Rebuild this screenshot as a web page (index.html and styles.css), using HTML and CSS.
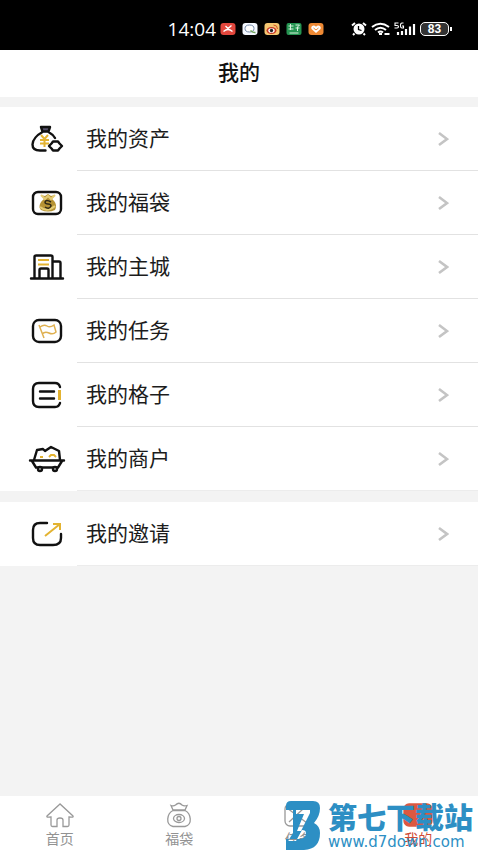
FILE: index.html
```html
<!DOCTYPE html>
<html lang="zh-CN">
<head>
<meta charset="utf-8">
<meta name="viewport" content="width=device-width, initial-scale=1">
<title>我的</title>
<link rel="stylesheet" href="styles.css">
</head>
<body>
<div class="status">
  <span class="time">14:04</span>
  <span class="apps">
    <svg class="app" viewBox="0 0 15 14"><rect y="1" width="15" height="12" rx="3" fill="#e2473d"/><path d="M3 9.500q4.500-4 9 0M5 4l2.500 2.500L11 3.500" fill="none" stroke="#fff" stroke-width="1.300"/></svg>
    <svg class="app" viewBox="0 0 15 14"><rect y="1" width="15" height="12" rx="3" fill="#f4f8ff"/><ellipse cx="7" cy="6.500" rx="4.500" ry="3.500" fill="#fff" stroke="#7489a8"/><path d="M8 8.500q3 2.500 5 2" fill="none" stroke="#6fa45c" stroke-width="1.500"/></svg>
    <svg class="app" viewBox="0 0 15 14"><rect y="1" width="15" height="12" rx="3" fill="#f5c772"/><ellipse cx="7" cy="8.500" rx="5" ry="3.500" fill="#c73825"/><ellipse cx="7" cy="8.500" rx="3.200" ry="2.300" fill="#fff"/><circle cx="7" cy="8.500" r="1.700" fill="#222"/><path d="M9 3q4 0 4 4" fill="none" stroke="#d95428"/></svg>
    <svg class="app" viewBox="0 0 15 14"><rect y="1" width="15" height="12" rx="2" fill="#259451"/><path d="M2 4h5M4 2v6M2 7h5M9 3h4l-2 2v4M9 6h4M3 11h9" fill="none" stroke="#d7f0dc"/></svg>
    <svg class="app" viewBox="0 0 15 14"><rect y="1" width="15" height="12" rx="3" fill="#ee8934"/><path d="M7.500 11L3 7q-1-3 2-3.500 1.500 0 2.500 1.200Q8.500 3.500 10 3.500q3 .5 2 3.500z" fill="#fff"/><path d="M5 6l2.500 2L10 6" fill="none" stroke="#ee8934"/></svg>
  </span>
  <span class="system">
    <svg width="16" height="14" viewBox="0 0 16 14"><circle cx="8" cy="7" r="5.500" fill="#fff"/><path d="M1 3.500L4 1M15 3.500L12 1M3.500 11.500L2 13M12.500 11.500L14 13" stroke="#fff" stroke-width="2"/><path d="M7.500 4v3.500l3 1" fill="none" stroke="#000" stroke-width="1.300"/></svg>
    <svg width="19" height="14" viewBox="0 0 19 14" fill="none" stroke="#fff" stroke-width="2"><path d="M1 5q8-6.500 17 0M4 8q5.500-4.500 11 0M7 10.500q2.500-2 5 0"/><path d="M8 12h3M13.500 12h5" stroke-width="1.800"/></svg>
    <svg width="22" height="14" viewBox="0 0 22 14"><path d="M4.500 1H1v2.500h2q1.500 0 1.500 1.200T3 6H.5M9.500 1H8Q6.500 1 6.500 3.500T8 6h1.500V4H8" fill="none" stroke="#fff" stroke-width="1.100"/><path d="M4 10v3M8 9v4M12 7v6M16 4.500V13M20 2v11" stroke="#fff" stroke-width="2.200"/></svg>
    <span class="battery">83</span>
  </span>
</div>
<header class="title"><h1>我的</h1></header>
<main>
  <nav class="group" aria-label="我的内容">
    <a class="row" href="#assets"><svg class="icon" viewBox="0 0 38 30"><path d="M13 3h9l-1.500 4.500h-6z" fill="#55506a"/><path d="M13 3h9l-1.500 4.500h-6zM14.500 8C9 11 4.500 16 4.500 20.500q0 6 7.500 6h5.500M20.500 8q4.500 2.500 6.500 6" class="line"/><path d="M13 11l3.500 4 3.500-4M12 16h9M12 19.500h9M16.500 15v8" class="gold"/><path d="M25 17.500h5l1.500 2 2.500 2.500-2.500 2.500-1.500 2h-5l-1.500-2L21 22l2.500-2.500z" class="line"/></svg><span class="label">我的资产</span><svg class="arrow" viewBox="0 0 12 16"><path d="M2 2l8 6-8 6"/></svg></a>
    <a class="row" href="#bags"><svg class="icon" viewBox="0 0 38 30"><rect x="5" y="4" width="28" height="22" rx="5" class="line"/><path d="M13 7l4 1 3-2 3 2 4-1-3 4c4 3 5 7 3 11q-7 3-14 0c-3-3-1-8 3-11z" fill="#b69334"/><path d="M13 7l4 4 3-3 3 3 4-4M12 19q7 6 15-1" fill="none" stroke="#e4cc76" stroke-width="2"/><path d="M23 14q-5-3-6 0 0 2 3 2t3 2q-2 4-6 1" fill="none" stroke="#302a17" stroke-width="1.500"/></svg><span class="label">我的福袋</span><svg class="arrow" viewBox="0 0 12 16"><path d="M2 2l8 6-8 6"/></svg></a>
    <a class="row" href="#city"><svg class="icon" viewBox="0 0 38 30"><path d="M3 26.500h32M6.500 26.500V5q0-1.500 1.500-1.500h15q1.500 0 1.500 1.500v21.500M24.500 9.500H31q1.500 0 1.500 1.500v15.500M11.500 26.500V18q0-1.500 1.500-1.500h6q1.500 0 1.500 1.500v8.500" class="line"/><path d="M10 8h11M10 12.500h11" class="gold"/></svg><span class="label">我的主城</span><svg class="arrow" viewBox="0 0 12 16"><path d="M2 2l8 6-8 6"/></svg></a>
    <a class="row" href="#tasks"><svg class="icon" viewBox="0 0 38 30"><rect x="5" y="4" width="28" height="22" rx="6" class="line"/><path d="M11 9l5 13M12 11q4-3 7-1t7-1l2 7q-3 3-7 1t-7 1" fill="none" stroke="#dfb050" stroke-width="1.500"/></svg><span class="label">我的任务</span><svg class="arrow" viewBox="0 0 12 16"><path d="M2 2l8 6-8 6"/></svg></a>
    <a class="row" href="#grid"><svg class="icon" viewBox="0 0 38 30"><path d="M32 7q-1-4-5-4H11q-6 0-6 6v12q0 6 6 6h16q4 0 5-4M12 11.500h14M12 18.500h14" class="line"/><path d="M31.500 10v10" class="gold thick"/></svg><span class="label">我的格子</span><svg class="arrow" viewBox="0 0 12 16"><path d="M2 2l8 6-8 6"/></svg></a>
    <a class="row" href="#shops"><svg class="icon" viewBox="0 0 38 30"><path d="M2 16.500h34M4 17l4 6.500h22l4-6.500M6 16l3-10 6-1 2 2 6-4 8 4 1 9" class="line"/><circle cx="12" cy="25" r="2" class="line fill"/><circle cx="27" cy="25" r="2" class="line fill"/><path d="M12 13h3M21 13l2-2h3l2 2" class="gold"/></svg><span class="label">我的商户</span><svg class="arrow" viewBox="0 0 12 16"><path d="M2 2l8 6-8 6"/></svg></a>
  </nav>
  <nav class="group second" aria-label="邀请">
    <a class="row" href="#invite"><svg class="icon" viewBox="0 0 38 30"><path d="M19 4h-7q-7 0-7 7v8q0 7 7 7h13q8 0 8-7v-4" class="line"/><path d="M17 17L32 5M25 5h7v6" class="gold"/></svg><span class="label">我的邀请</span><svg class="arrow" viewBox="0 0 12 16"><path d="M2 2l8 6-8 6"/></svg></a>
  </nav>
</main>
<footer class="bottom">
  <nav class="tabs" aria-label="主导航">
    <a class="tab" href="#home"><svg class="tabicon" viewBox="0 0 30 26"><path d="M15 2L2 14q-1 1.500 4 1v8q0 1.500 1.500 1.500H12V18q0-2 3-2t3 2v6.500h4.500q1.500 0 1.500-1.500v-8q5 .5 4-1z"/></svg><span>首页</span></a>
    <a class="tab" href="#bag"><svg class="tabicon" viewBox="0 0 30 26"><path d="M9 8L7 3.500q2.500 1 4.500-.5Q15-.5 18 3q2 1.500 5 .5L21 8zM9 8.500h12c6 3 8 14 0 16H9c-8-2-6-13 0-16z"/><ellipse cx="15" cy="16.500" rx="5.500" ry="4"/><circle cx="15" cy="16.500" r="2"/></svg><span>福袋</span></a>
    <a class="tab" href="#task"><svg class="tabicon" viewBox="0 0 30 26"><rect x="1" y="2" width="28" height="22" rx="5"/><path d="M3 6l20 15M5 20l14-13"/></svg><span>任务</span></a>
    <a class="tab active" href="#me" aria-current="page"><svg class="tabicon" viewBox="0 0 30 26"><rect x="1" y="2" width="28" height="22" rx="5"/></svg><span>我的</span></a>
  </nav>
  <div class="mark">
    <svg class="marklogo" viewBox="0 0 36 50"><path fill-rule="evenodd" d="M6 1h22q7 0 7 7 0 8-6 15 6 3 6 10 0 16-16 17H1V39h12q8 0 8-6 0-3-4-3L11 41H3l5-8V10H1V6q0-5 5-5zM11 10v4h8l-7 17h4l9-18v-3z" fill="#2d8fc4"/></svg>
    <div class="marktext"><strong>第七下载站</strong><span>www.d7down.com</span></div>
  </div>
</footer>
</body>
</html>
```
FILE: styles.css
```css
* { box-sizing: border-box; }
body {
  margin: 0;
  min-height: 100vh;
  display: flex;
  flex-direction: column;
  background: #f3f3f3;
  color: #1c1c1c;
  font-family: "Noto Sans CJK SC", sans-serif;
}
a { color: inherit; text-decoration: none; }
.status {
  display: flex;
  align-items: center;
  height: 50px;
  padding: 8px 29px 0 0;
  background: #000;
  color: #fff;
}
.time {
  margin-left: auto;
  font: 400 19px/24px "Open Sans", sans-serif;
}
.apps { display: flex; gap: 6px; margin-left: 4px; }
.app { width: 16px; height: 14px; }
.system { display: flex; align-items: center; gap: 4px; margin-left: 27px; }
.battery {
  position: relative;
  width: 29px;
  border: 1px solid #fff;
  border-radius: 5px;
  background: #333;
  text-align: center;
  font: 700 12px/12px "Liberation Sans", sans-serif;
}
.battery::after {
  content: "";
  position: absolute;
  right: -4px;
  top: 4px;
  width: 2px;
  height: 4px;
  background: #fff;
}
.title {
  display: flex;
  align-items: center;
  justify-content: center;
  height: 47px;
  padding-bottom: 6px;
  background: #fff;
}
h1 { margin: 0; font-size: 21px; line-height: 30px; font-weight: 500; color: #111; }
main { flex: 1; }
.group { margin-top: 10px; background: #fff; }
.second { margin-top: 11px; }
.row {
  position: relative;
  display: flex;
  align-items: center;
  height: 64px;
  padding: 0 29px 0 28px;
}
.row::after {
  content: "";
  position: absolute;
  left: 77px;
  right: 0;
  bottom: 0;
  height: 1px;
  background: #e2e2e2;
}
.group .row:last-child::after { background: #ececec; }
.icon { width: 38px; height: 30px; }
.line { fill: none; stroke: #111; stroke-width: 2.400; stroke-linejoin: round; stroke-linecap: round; }
.fill { fill: #fff; }
.gold { fill: none; stroke: #e3b331; stroke-width: 2; }
.thick { stroke-width: 3; }
.label { flex: 1; margin-left: 20px; padding-bottom: 4px; font-size: 21px; line-height: 30px; }
.arrow { width: 12px; height: 16px; fill: none; stroke: #c4c4c4; stroke-width: 2.600; }
.bottom { position: relative; background: #fff; }
.tabs { display: grid; grid-template-columns: repeat(4, 1fr); height: 54px; }
.tab {
  display: flex;
  flex-direction: column;
  align-items: center;
  padding-top: 6px;
  color: #929292;
  font-size: 14px;
  line-height: 20px;
}
.tabicon { width: 30px; height: 26px; fill: none; stroke: #999; stroke-width: 1.300; }
.active { color: #cf4b36; }
.active .tabicon { fill: #dc5840; stroke: #dc5840; }
.mark {
  position: absolute;
  right: 7px;
  bottom: 0;
  display: flex;
  gap: 7px;
  height: 50px;
  color: #2d8fc4;
  pointer-events: none;
}
.marklogo { width: 36px; height: 50px; }
.marktext { display: flex; flex-direction: column; width: 143px; white-space: nowrap; }
.marktext strong { font-size: 29px; line-height: 32px; font-weight: 900; }
.marktext span { margin-top: 2px; font: 15px/16px "DejaVu Sans", sans-serif; }
```
